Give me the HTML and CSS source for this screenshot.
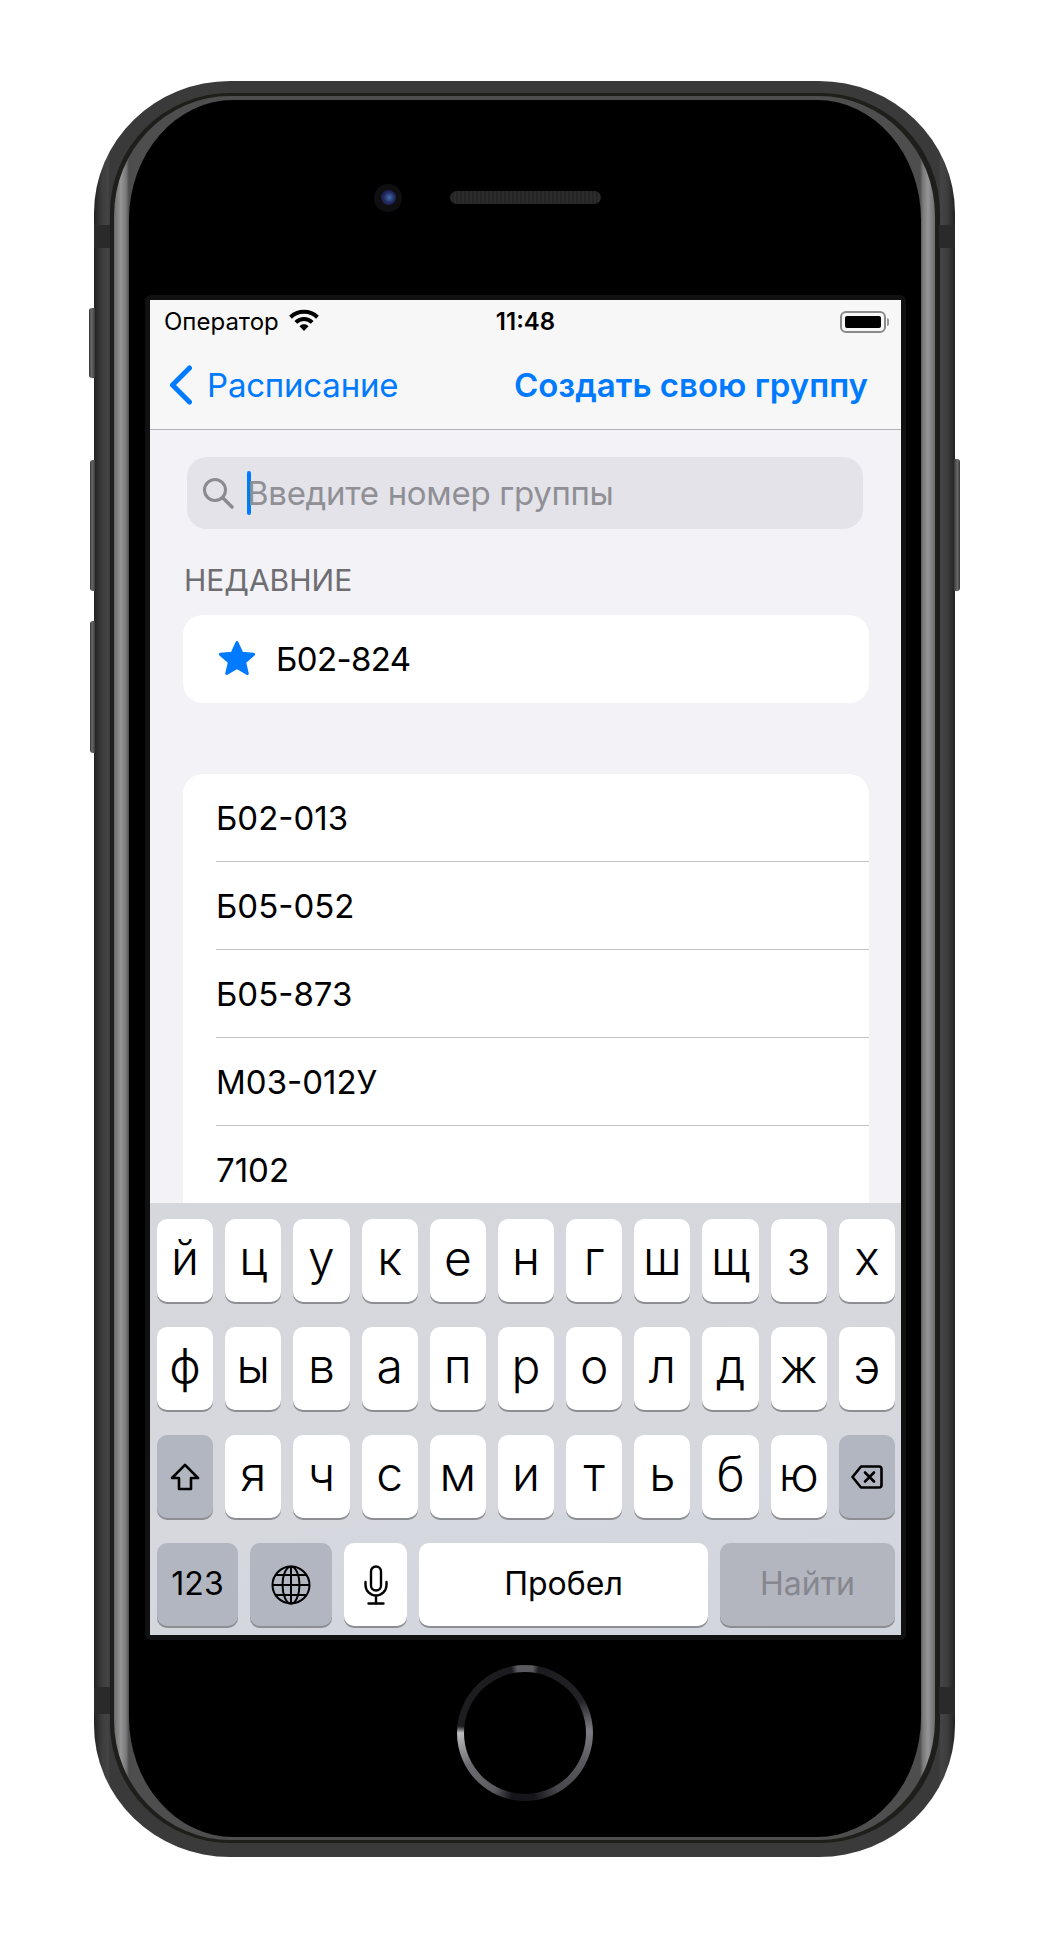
FILE: index.html
```html
<!DOCTYPE html>
<html lang="ru">
<head>
    <meta charset="UTF-8">
    <title>Поиск группы</title>
    <link rel="stylesheet" href="styles.css">
</head>
<body>
    <div class="phone">
        <span class="side-btn mute"></span>
        <span class="side-btn vol-up"></span>
        <span class="side-btn vol-down"></span>
        <span class="side-btn power"></span>
        <span class="band band-tl"></span>
        <span class="band band-tr"></span>
        <span class="band band-bl"></span>
        <span class="band band-br"></span>
        <div class="rim">
            <div class="bevel">
                <div class="face">
                    <div class="bezel-top">
                        <div class="camera"><span class="lens"></span></div>
                        <div class="speaker"></div>
                    </div>
                    <div class="screen-frame">
                        <div class="screen">
                            <div class="status-bar">
                                <div class="carrier">
                                    <span>Оператор</span>
                                    <svg class="wifi" viewBox="0 0 30 22">
                                        <path d="M1.5 8.2C9 1 21 1 28.5 8.2" fill="none" stroke="#000" stroke-width="4"/>
                                        <path d="M6.8 13.4C11.5 9 18.5 9 23.2 13.4" fill="none" stroke="#000" stroke-width="4"/>
                                        <path d="M10.5 17.2C13 14.7 17 14.7 19.5 17.2L15 22Z" fill="#000"/>
                                    </svg>
                                </div>
                                <div class="clock">11:48</div>
                                <div class="battery-wrap">
                                    <div class="battery"><span class="battery-fill"></span></div>
                                    <span class="battery-nub"></span>
                                </div>
                            </div>
                            <div class="nav-bar">
                                <div class="nav-back">
                                    <svg class="chevron" viewBox="0 0 24 40">
                                        <path d="M20.5 3L3.5 20L20.5 37" fill="none" stroke="#007aff" stroke-width="5" stroke-linecap="round" stroke-linejoin="round"/>
                                    </svg>
                                    <span>Расписание</span>
                                </div>
                                <div class="nav-action">Создать свою группу</div>
                            </div>
                            <div class="content">
                                <div class="search">
                                    <svg class="search-icon" viewBox="0 0 32 32">
                                        <circle cx="13" cy="13" r="10.5" fill="none" stroke="#8a8a8f" stroke-width="3"/>
                                        <path d="M21 21L30 30" stroke="#8a8a8f" stroke-width="3.4" stroke-linecap="round"/>
                                    </svg>
                                    <span class="caret"></span>
                                    <span class="placeholder">Введите номер группы</span>
                                </div>
                                <div class="section-label">НЕДАВНИЕ</div>
                                <div class="card">
                                    <div class="row recent-row">
                                        <svg class="star" viewBox="0 0 40 40">
                                            <path d="M20 3.5L24.8 14.2 36.600 15.300 27.600 23 30.300 34.500 20 28.400 9.700 34.500 12.400 23 3.400 15.300 15.200 14.200Z" fill="#007aff" stroke="#007aff" stroke-width="3" stroke-linejoin="round"/>
                                        </svg>
                                        <span>Б02-824</span>
                                    </div>
                                </div>
                                <div class="card card-list">
                                    <div class="row">Б02-013</div>
                                    <div class="row">Б05-052</div>
                                    <div class="row">Б05-873</div>
                                    <div class="row">М03-012У</div>
                                    <div class="row">7102</div>
                                </div>
                            </div>
                            <div class="keyboard">
                                <div class="key-row">
                                    <div class="key">й</div><div class="key">ц</div><div class="key">у</div><div class="key">к</div><div class="key">е</div><div class="key">н</div><div class="key">г</div><div class="key">ш</div><div class="key">щ</div><div class="key">з</div><div class="key">х</div>
                                </div>
                                <div class="key-row">
                                    <div class="key">ф</div><div class="key">ы</div><div class="key">в</div><div class="key">а</div><div class="key">п</div><div class="key">р</div><div class="key">о</div><div class="key">л</div><div class="key">д</div><div class="key">ж</div><div class="key">э</div>
                                </div>
                                <div class="key-row">
                                    <div class="key key-dark">
                                        <svg class="icon-shift" viewBox="0 0 30 28">
                                            <path d="M15 1.8L28 15H21V26H9V15H2Z" fill="none" stroke="#000" stroke-width="2.6" stroke-linejoin="round"/>
                                        </svg>
                                    </div>
                                    <div class="key">я</div><div class="key">ч</div><div class="key">с</div><div class="key">м</div><div class="key">и</div><div class="key">т</div><div class="key">ь</div><div class="key">б</div><div class="key">ю</div>
                                    <div class="key key-dark">
                                        <svg class="icon-delete" viewBox="0 0 32 24">
                                            <path d="M10 1.5H28A2.5 2.5 0 0 1 30.5 4V20A2.5 2.5 0 0 1 28 22.500H10L1.500 12Z" fill="none" stroke="#000" stroke-width="2.6" stroke-linejoin="round"/>
                                            <path d="M14 7.500L23 16.500M23 7.500L14 16.500" stroke="#000" stroke-width="2.600" stroke-linecap="round"/>
                                        </svg>
                                    </div>
                                </div>
                                <div class="key-row key-row-bottom">
                                    <div class="key key-dark key-small">123</div>
                                    <div class="key key-dark">
                                        <svg class="icon-globe" viewBox="0 0 40 40" fill="none" stroke="#000" stroke-width="2">
                                            <circle cx="20" cy="20" r="18.500"/>
                                            <ellipse cx="20" cy="20" rx="8.500" ry="18.500"/>
                                            <path d="M20 1.500V38.500M1.500 20H38.500M4.500 10H35.500M4.500 30H35.500"/>
                                        </svg>
                                    </div>
                                    <div class="key">
                                        <svg class="icon-mic" viewBox="0 0 24 40" fill="none" stroke="#000" stroke-width="2.400">
                                            <rect x="7" y="1.500" width="10" height="24" rx="5"/>
                                            <path d="M1.500 17V20A10.500 10.500 0 0 0 22.500 20V17M12 31V38M4.500 38.500H19.500" stroke-linecap="round"/>
                                        </svg>
                                    </div>
                                    <div class="key key-small">Пробел</div>
                                    <div class="key key-dark key-small key-disabled">Найти</div>
                                </div>
                            </div>
                        </div>
                    </div>
                    <div class="bezel-bottom">
                        <div class="home-btn"><span class="home-inner"></span></div>
                    </div>
                </div>
            </div>
        </div>
    </div>
</body>
</html>
```
FILE: styles.css
```css
* {
    box-sizing: border-box;
}
body {
    margin: 0;
    width: 1050px;
    height: 1934px;
    padding: 81px 95px 77px 94px;
    background: #fff;
    font-family: Inter, "Noto Sans", sans-serif;
    color: #000;
    overflow: hidden;
}

/* phone body */
.phone {
    position: relative;
    height: 100%;
    padding: 12px 15px 14px 16px;
    border-radius: 136px / 132px;
    background: linear-gradient(to right, #222 0, #3d3d3d 8px, #444 14px, #3a3a3a 16px, #3a3a3a calc(100% - 16px), #444 calc(100% - 14px), #3d3d3d calc(100% - 8px), #222 100%);
}
.rim {
    height: 100%;
    padding: 3px 5px 3px 4px;
    border-radius: 120px / 120px;
    background: #1e1e1a;
}
.bevel {
    height: 100%;
    padding: 4px 14px 3px 15px;
    border-radius: 116px / 120px;
    background: linear-gradient(to right, #6c6c6c 0, #959595 7px, #7a7a7a 12px, #4e4e4e 15px, #4e4e4e calc(100% - 15px), #7a7a7a calc(100% - 12px), #959595 calc(100% - 7px), #6c6c6c 100%);
}
.face {
    height: 100%;
    display: flex;
    flex-direction: column;
    padding: 0 15px 0 16px;
    border-radius: 104px / 120px;
    background: #000;
}
.side-btn {
    position: absolute;
    width: 6px;
    left: -5px;
    border-radius: 3px 0 0 3px;
    background: linear-gradient(to right, #333, #6a6a6a 40%, #3a3a3a);
}
.mute { top: 227px; height: 70px; }
.vol-up { top: 379px; height: 131px; left: -4px; width: 5px; }
.vol-down { top: 540px; height: 132px; left: -4px; width: 5px; }
.power {
    top: 378px;
    height: 132px;
    left: auto;
    right: -5px;
    border-radius: 0 3px 3px 0;
    background: linear-gradient(to left, #333, #6a6a6a 40%, #3a3a3a);
}
.band {
    position: absolute;
    width: 16px;
    background: #2a2a2a;
}
.band-tl { left: 0; top: 144px; height: 23px; }
.band-tr { right: 0; top: 144px; height: 23px; }
.band-bl { left: 0; top: 1606px; height: 27px; }
.band-br { right: 0; top: 1606px; height: 27px; }

.bezel-top {
    height: 195px;
    flex-shrink: 0;
    display: grid;
    grid-template-columns: 1fr 151px 1fr;
    align-items: center;
    column-gap: 48px;
}
.camera {
    justify-self: end;
    width: 28px;
    height: 28px;
    border-radius: 50%;
    background: #0f0f12;
    display: flex;
    align-items: center;
    justify-content: center;
}
.lens {
    width: 15px;
    height: 15px;
    border-radius: 50%;
    background: radial-gradient(circle at 55% 50%, #3f6fa8 0, #23285e 50%, #11132a 100%);
}
.speaker {
    height: 13px;
    border-radius: 7px;
    background: repeating-linear-gradient(to right, #2c2c2c 0, #2c2c2c 2px, #242424 2px, #242424 4px);
}
.screen-frame {
    height: 1345px;
    flex-shrink: 0;
    padding: 5px;
    border-radius: 6px;
    background: #111;
}
.bezel-bottom {
    flex: 1;
    display: flex;
    align-items: center;
    justify-content: center;
    padding: 0 1px 11px 0;
}
.home-btn {
    width: 136px;
    height: 136px;
    padding: 7px;
    border-radius: 50%;
    background: conic-gradient(#5a5a5e 0deg, #5a5a5e 7deg, #1c1c20 12deg, #222226 60deg, #7c7c82 88deg, #5a5a60 115deg, #47474c 150deg, #16161a 172deg, #16161a 192deg, #5c5c60 208deg, #6c6c70 240deg, #b0b0b4 266deg, #c0c0c4 270deg, #1d1d20 276deg, #1c1c20 348deg, #5a5a5e 353deg);
}
.home-inner {
    display: block;
    width: 100%;
    height: 100%;
    border-radius: 50%;
    background: #000;
}

/* screen */
.screen {
    height: 100%;
    display: flex;
    flex-direction: column;
    background: #f2f2f7;
    overflow: hidden;
}
.status-bar {
    height: 40px;
    flex-shrink: 0;
    display: grid;
    grid-template-columns: 1fr auto 1fr;
    align-items: center;
    padding: 3px 12px 0 14px;
    background: #f7f7f7;
    font-size: 24px;
}
.carrier {
    display: flex;
    align-items: center;
    gap: 10px;
}
.wifi {
    width: 30px;
    height: 22px;
    margin-top: -3px;
}
.clock {
    font-weight: 600;
    margin-left: -2px;
}
.battery-wrap {
    justify-self: end;
    display: flex;
    align-items: center;
    gap: 1px;
}
.battery {
    width: 46px;
    height: 22px;
    padding: 3px;
    border: 2px solid #8a8a8a;
    border-radius: 6px;
}
.battery-fill {
    display: block;
    height: 100%;
    border-radius: 2px;
    background: #000;
}
.battery-nub {
    width: 2px;
    height: 8px;
    border-radius: 0 2px 2px 0;
    background: #9a9a9a;
}
.nav-bar {
    height: 90px;
    flex-shrink: 0;
    display: flex;
    align-items: center;
    justify-content: space-between;
    padding: 0 33px 0 19px;
    border-bottom: 1px solid #b2b2b2;
    background: #f7f7f7;
    color: #007aff;
    font-size: 33px;
}
.nav-back {
    display: flex;
    align-items: center;
    gap: 14px;
    letter-spacing: -0.2px;
}
.chevron {
    width: 24px;
    height: 40px;
}
.nav-action {
    font-weight: 600;
}

.content {
    flex: 1;
    overflow: hidden;
    padding-top: 27px;
}
.search {
    height: 72px;
    margin: 0 38px 0 37px;
    display: flex;
    align-items: center;
    padding-left: 15px;
    border-radius: 20px;
    background: #e3e3e9;
    font-size: 33px;
}
.search-icon {
    width: 32px;
    height: 32px;
    margin-right: 13px;
}
.caret {
    width: 4px;
    height: 44px;
    border-radius: 2px;
    background: #007aff;
    margin-right: -4px;
}
.placeholder {
    color: #8f8f95;
    letter-spacing: -0.3px;
}
.section-label {
    margin: 31px 0 0 34px;
    height: 55px;
    font-size: 30px;
    line-height: 40px;
    color: #6d6d72;
}
.card {
    margin: 0 32px 0 33px;
    border-radius: 20px;
    background: #fff;
    font-size: 33px;
    overflow: hidden;
}
.card-list {
    margin-top: 71px;
    border-radius: 20px 20px 0 0;
    overflow: visible;
}
.row {
    height: 88px;
    display: flex;
    align-items: center;
    margin-left: 33px;
    border-bottom: 1px solid #c6c6c8;
}
.card-list .row:last-child {
    border-bottom: none;
}
.recent-row {
    border-bottom: none;
    letter-spacing: -0.6px;
}
.star {
    width: 40px;
    height: 40px;
    margin: 0 19px 0 1px;
}

/* keyboard */
.keyboard {
    height: 432px;
    flex-shrink: 0;
    display: flex;
    flex-direction: column;
    gap: 25px;
    padding: 16px 6px 0 7px;
    background: linear-gradient(170deg, #d6d7dc, #d6d8de 60%, #d1d5de);
}
.key-row {
    display: grid;
    grid-template-columns: repeat(11, 1fr);
    gap: 12px;
}
.key-row-bottom {
    grid-template-columns: 81px 82px 63px 289px 175px;
}
.key {
    height: 83px;
    display: flex;
    align-items: center;
    justify-content: center;
    border-radius: 10px;
    background: #fff;
    box-shadow: 0 2px 0 #8d8e92;
    font-size: 48px;
    font-weight: 300;
    padding-bottom: 6px;
}
.key-dark {
    background: #b2b6c0;
}
.key-small {
    font-size: 32px;
    font-weight: 400;
    padding-bottom: 2px;
}
.key-disabled {
    color: #86878f;
    background: #b3b5bf;
}
.icon-shift {
    width: 30px;
    height: 28px;
    margin-top: 6px;
}
.icon-delete {
    width: 32px;
    height: 24px;
    margin-top: 6px;
}
.icon-globe {
    width: 40px;
    height: 40px;
    margin-top: 6px;
}
.icon-mic {
    width: 24px;
    height: 40px;
    margin-top: 6px;
}
```
